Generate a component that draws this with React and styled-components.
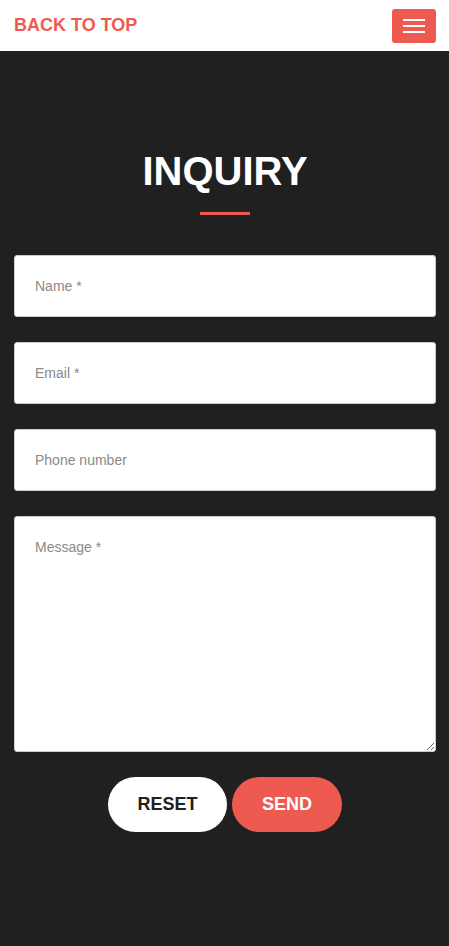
import React from 'react'
import styled, { createGlobalStyle } from 'styled-components'

const GlobalStyle = createGlobalStyle`
  html, body {
    margin: 0;
    padding: 0;
    background: #202020;
    font-family: "Liberation Sans", Arial, sans-serif;
  }
  * {
    box-sizing: border-box;
  }
`

const Header = styled.header`
  display: flex;
  align-items: center;
  justify-content: space-between;
  height: 51px;
  padding: 0 13px 0 14px;
  background: #fff;
`

const BackLink = styled.a`
  color: #ee5a4f;
  font-size: 18px;
  font-weight: 700;
  text-decoration: none;
`

const MenuButton = styled.button`
  display: flex;
  flex-direction: column;
  justify-content: center;
  align-items: center;
  gap: 4px;
  width: 44px;
  height: 34px;
  padding: 0;
  border: none;
  border-radius: 3px;
  background: #ee5a4f;

  span {
    display: block;
    width: 22px;
    height: 2px;
    background: #fff;
  }
`

const Section = styled.main`
  min-height: 895px;
  padding: 96px 13px 60px 14px;
  background: #202020;
`

const Title = styled.h1`
  margin: 0;
  color: #fff;
  font-size: 40px;
  line-height: 48px;
  font-weight: 700;
  text-align: center;
`

const Bar = styled.div`
  width: 50px;
  height: 3px;
  margin: 17px auto 40px;
  background: #ee5a4f;
`

const Form = styled.form`
  display: flex;
  flex-direction: column;
  gap: 25px;
`

const Field = styled.input`
  width: 100%;
  height: 62px;
  padding: 0 20px;
  border: 1px solid #ccc;
  border-radius: 3px;
  background: #fff;
  font-family: "Liberation Sans", Arial, sans-serif;
  font-size: 14px;
  color: #333;

  &::placeholder {
    color: #8a8a8a;
  }
`

const Area = styled.textarea`
  width: 100%;
  height: 236px;
  padding: 22px 20px;
  border: 1px solid #ccc;
  border-radius: 3px;
  background: #fff;
  font-family: "Liberation Sans", Arial, sans-serif;
  font-size: 14px;
  color: #333;
  resize: vertical;

  &::placeholder {
    color: #8a8a8a;
  }
`

const Actions = styled.div`
  display: flex;
  justify-content: center;
  gap: 5px;
`

const Pill = styled.button`
  width: ${props => props.w}px;
  height: 55px;
  border: none;
  border-radius: 28px;
  background: ${props => (props.primary ? '#ee5a4f' : '#fff')};
  color: ${props => (props.primary ? '#fff' : '#202020')};
  font-family: "Liberation Sans", Arial, sans-serif;
  font-size: 18px;
  font-weight: 700;
`

const App = () => {
  return (
    <>
      <GlobalStyle />
      <Header>
        <BackLink href='#'>BACK TO TOP</BackLink>
        <MenuButton type='button' aria-label='menu'>
          <span />
          <span />
          <span />
        </MenuButton>
      </Header>
      <Section>
        <Title>INQUIRY</Title>
        <Bar />
        <Form onSubmit={e => e.preventDefault()}>
          <Field placeholder='Name *' />
          <Field placeholder='Email *' />
          <Field placeholder='Phone number' />
          <Area placeholder='Message *' />
          <Actions>
            <Pill type='reset' w={119}>
              RESET
            </Pill>
            <Pill type='submit' primary w={110}>
              SEND
            </Pill>
          </Actions>
        </Form>
      </Section>
    </>
  )
}

export default App
